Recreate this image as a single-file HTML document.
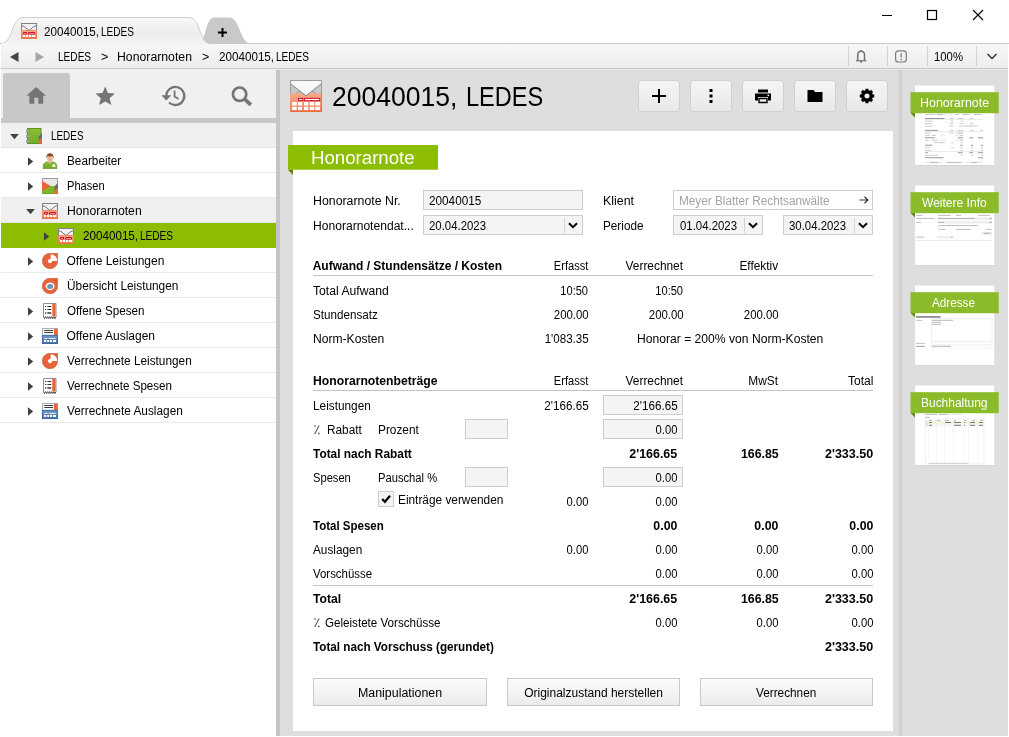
<!DOCTYPE html>
<html lang="de"><head><meta charset="utf-8"><title>20040015, LEDES</title>
<style>
*{box-sizing:border-box;margin:0;padding:0}
html,body{width:1009px;height:737px;overflow:hidden;background:#fff;font-family:"Liberation Sans",sans-serif;font-size:12px;color:#000}
#app{position:relative;width:1009px;height:737px;overflow:hidden;background:#fff}
.abs,.t,.b{position:absolute}
.t{height:16px;line-height:16px;white-space:nowrap;filter:grayscale(1)}
.bd{font-weight:bold}
#crumb{left:1px;top:44px;width:1007px;height:25px;background:linear-gradient(#f7f7f7,#ededed);border-bottom:1px solid #c9c9c9}
#hl69{left:276px;top:69px;width:732px;height:1px;background:#e9e9e9}
#side{left:1px;top:69px;width:275px;height:667px;background:#fff}
#sidetb{left:1px;top:69px;width:275px;height:50px;background:#f0f0f0}
#hometab{left:3px;top:73px;width:67px;height:46px;background:#c8c8c8;border-radius:3px 3px 0 0}
#sidebar-line{left:1px;top:118px;width:275px;height:5px;background:#c8c8c8}
.row{position:absolute;left:1px;width:275px;height:25px;border-bottom:1px solid #ebebeb}
.row.g{background:#f0f0f0;border-bottom-color:#e6e6e6}
.row.sel{background:#8cbd00;border-bottom-color:#8cbd00}
#split{left:276px;top:70px;width:4px;height:666px;background:#c5c5c5}
#main{left:280px;top:69px;width:621px;height:667px;background:#dedede}
#msh{left:897px;top:69px;width:5px;height:667px;background:linear-gradient(90deg,#dedede,#cacaca)}
#card{left:293px;top:131px;width:600px;height:600px;background:#fff}
#right{left:902px;top:69px;width:106px;height:667px;background:#dedede}
.btn{position:absolute;top:80px;width:42px;height:32px;border:1px solid #d0d0d0;border-radius:3px;background:linear-gradient(#f5f5f5,#e8e8e8)}
.btn svg{display:block}
.inp{position:absolute;height:19px;border:1px solid #cdcdcd;background:#f4f4f4}
.hl{position:absolute;height:1px;background:#c4c4c4}
.pbtn{position:absolute;top:678px;height:28px;border:1px solid #c8c8c8;background:linear-gradient(#fcfcfc,#ebebeb)}
.lab{position:absolute;background:#8cbd00;color:#fff}
#title{height:36px;line-height:36px;font-size:28px}
.ml{font-size:17.5px;height:24px;line-height:24px;color:#fff}
.rl{font-size:12.5px;color:#fff}
</style></head><body><div id="app">
<svg width="0" height="0" style="position:absolute">
 <defs>
  <symbol id="ic-env" viewBox="0 0 16 16">
    <linearGradient id="og" x1="0" y1="0" x2="0" y2="1"><stop offset="0" stop-color="#f7ad8c"/><stop offset="1" stop-color="#ee7a50"/></linearGradient>
    <rect x="0.500" y="0.500" width="15" height="7" fill="#f1f1f1" stroke="#808386"/>
    <path d="M1 2.800 L3.200 3.600 L8 7.500 L12.800 3.600 L15 2.800" fill="none" stroke="#74787b" stroke-width="1"/>
    <rect x="0" y="7" width="16" height="9" fill="url(#og)"/>
    <path d="M7.200 7 L8 7.700 L8.800 7z" fill="#74787b"/>
    <rect x="0.400" y="7.400" width="15.200" height="8.200" fill="none" stroke="#ec6f45" stroke-width="0.700" stroke-opacity="0.700"/>
    <path d="M2.500 11 V9.500 H5.500 V11z" fill="#fff" stroke="#c8142e" stroke-width="1"/>
    <path d="M7.500 11 V9.500 H13.500 V11z" fill="#fff" stroke="#c8142e" stroke-width="1"/>
    <path d="M2 11.900 h2.100 v2 h-2.100z M5 11.900 h2.100 v2 h-2.100z M8 11.900 h2.100 v2 h-2.100z M11 11.900 h3.200 v2 h-3.200z" fill="#fff"/>
  </symbol>
  <symbol id="ic-env32" viewBox="0 0 32 32">
    <linearGradient id="og2" x1="0" y1="0" x2="0" y2="1"><stop offset="0" stop-color="#f6ab8a"/><stop offset="1" stop-color="#ef7c52"/></linearGradient>
    <rect x="0.500" y="0.500" width="31" height="14" fill="#c6c8c9" stroke="#9a9c9e"/>
    <rect x="0" y="13.200" width="32" height="18.800" fill="url(#og2)"/>
    <path d="M31.500 13.200 V31.500 H0.500" fill="none" stroke="#ea6a3e" stroke-width="1" stroke-opacity="0.800"/>
    <path d="M6.500 13.200 L10.500 10.500 M25.500 13.200 L21.500 10.500" fill="none" stroke="#8d8f91" stroke-width="0.900"/>
    <path d="M1 1 H31 V4 L16 15.800 L1 4z" fill="#f8f8f8"/>
    <path d="M1 4 L16 15.800 L31 4" fill="none" stroke="#85888a" stroke-width="1"/>
    <rect x="8.500" y="18.400" width="4.200" height="2.200" fill="#fff" stroke="#cc2238" stroke-width="1.100"/>
    <rect x="14.500" y="18.400" width="15.200" height="2.200" fill="#fff" stroke="#cc2238" stroke-width="1.100"/>
    <path d="M2.100 22 h4.700 v3.600 h-4.700z M8 22 h4.300 v3.600 h-4.300z M14 22 h4.300 v3.600 h-4.300z M19.700 22 h4.500 v3.600 h-4.500z M25.200 22 h4.800 v3.600 h-4.800z M2.100 26.800 h4.700 v3.300 h-4.700z M8 26.800 h4.300 v3.300 h-4.300z M14 26.800 h4.300 v3.300 h-4.300z M19.700 26.800 h4.500 v3.300 h-4.500z M25.200 26.800 h4.800 v3.300 h-4.800z" fill="#fff"/>
  </symbol>
  <symbol id="ic-book" viewBox="0 0 16 16">
    <linearGradient id="gg2" x1="0" y1="0" x2="0" y2="1"><stop offset="0" stop-color="#8cbf30"/><stop offset="1" stop-color="#75ab27"/></linearGradient>
    <rect x="1.500" y="0.500" width="13.500" height="15" fill="url(#gg2)" stroke="#5e9420"/>
    <path d="M0.200 2.300 h2.600 a1 1 0 0 1 0 2 h-2.600z M0.200 7.300 h2.600 a1 1 0 0 1 0 2 h-2.600z M0.200 12.300 h2.600 a1 1 0 0 1 0 2 h-2.600z" fill="#bdbdbd" stroke="#777" stroke-width="0.600"/>
    <path d="M12.800 8.300 L15.400 5.400 L16 6 L16 10.600 L12.800 12.300z" fill="#6b6b6b"/>
    <path d="M12.800 12.300 L16 10.600 L16 16 L12.800 16z" fill="#ea633a"/>
  </symbol>
  <symbol id="ic-person" viewBox="0 0 16 16">
    <linearGradient id="gg1" x1="0" y1="0" x2="0" y2="1"><stop offset="0" stop-color="#8cc034"/><stop offset="1" stop-color="#6fa524"/></linearGradient>
    <path d="M1.200 15.700 v-3.400 c0 -1.800 2 -3 4.300 -3.600 l2.500 2.300 l2.500 -2.300 c2.300 0.600 4.300 1.800 4.300 3.600 v3.400z" fill="url(#gg1)" stroke="#5e9420" stroke-width="0.600"/>
    <path d="M6 8.300 L8 10.800 L10 8.300z" fill="#e9b79c"/>
    <ellipse cx="8" cy="5.600" rx="2.700" ry="3.300" fill="#e8b195"/>
    <path d="M4.600 5.800 c-0.800 -3.400 1 -5.500 3.400 -5.500 s4.200 2.100 3.400 5.500 c-0.300 -1.700 -0.900 -2.500 -1.500 -2.800 c-1.200 0.600 -2.600 0.600 -3.800 0 c-0.600 0.300 -1.200 1.100 -1.500 2.800z" fill="#8a4a26"/>
    <rect x="10.300" y="11.700" width="3" height="2.300" fill="#fff"/>
    <rect x="11.200" y="11.100" width="1.200" height="0.800" fill="#fff"/>
  </symbol>
  <symbol id="ic-phase" viewBox="0 0 16 16">
    <rect x="0.500" y="0.500" width="15" height="9" fill="#e8e8e8" stroke="#9d9d9d"/>
    <path d="M0 8 L13 8 L13 16 L0 16z" fill="#7eb52c"/>
    <path d="M0.300 15.700 h12.500" stroke="#5e9420" stroke-width="0.600"/>
    <path d="M0 2.800 L8.500 8 L0 13.200z" fill="#ea633a"/>
    <path d="M12.500 8.500 L15.300 5.500 L16 6.200 L16 10.800 L12.500 12.500z" fill="#6b6b6b"/>
    <path d="M12.500 12.500 L16 10.800 L16 16 L12.500 16z" fill="#ea633a"/>
  </symbol>
  <symbol id="ic-pie" viewBox="0 0 16 16">
    <path d="M8 0.300 H15.700 V8 A7.700 7.700 0 1 1 8 0.300z" fill="#e6643c" stroke="#cf5631" stroke-width="0.600"/>
    <path d="M8.700 8.100 V1.200 A6.800 6.800 0 0 1 15.300 8.100z" fill="#fff"/>
    <path d="M12.300 1.300 L15 4" stroke="#cf5631" stroke-width="0.700"/>
    <circle cx="8.100" cy="8.100" r="2.100" fill="#fff"/>
  </symbol>
  <symbol id="ic-over" viewBox="0 0 16 16">
    <path d="M8 0.300 H15.700 V8 A7.700 7.700 0 1 1 8 0.300z" fill="#e6643c" stroke="#cf5631" stroke-width="0.600"/>
    <ellipse cx="8.100" cy="8.300" rx="4.400" ry="3.900" fill="#fff"/>
    <ellipse cx="8.100" cy="8.400" rx="3" ry="2.500" fill="#6e94b8"/>
    <path d="M12.300 1.300 L15 4" stroke="#b9472a" stroke-width="0.800"/>
  </symbol>
  <symbol id="ic-rcpt" viewBox="0 0 16 16">
    <path d="M1.500 0.500 H14 V13.800 H1.500z" fill="#fff"/>
    <path d="M1.500 14 V0.500 H14 V14" fill="none" stroke="#8f8f8f" stroke-width="1"/>
    <path d="M1.500 13.600 l1.040 2 l1.040 -2 l1.040 2 l1.040 -2 l1.040 2 l1.040 -2 l1.040 2 l1.040 -2 l1.040 2 l1.040 -2 l1.040 2 l1.060 -2" fill="#fff" stroke="#4f4f4f" stroke-width="1"/>
    <rect x="10.300" y="1" width="3.200" height="12.200" fill="#ea633a"/>
    <path d="M3 3.500 h1.200 M5.300 3.500 h4 M3 6.500 h1.200 M5.300 6.500 h4" stroke="#333" stroke-width="1"/>
    <path d="M3 10 h1.200 M5.300 10 h4" stroke="#333" stroke-width="1.700"/>
  </symbol>
  <symbol id="ic-ausl" viewBox="0 0 16 16">
    <linearGradient id="bg1" x1="0" y1="0" x2="0" y2="1"><stop offset="0" stop-color="#6f97c4"/><stop offset="1" stop-color="#4472a6"/></linearGradient>
    <rect x="0.500" y="0.500" width="15" height="7" fill="#fff" stroke="#a3adb8"/>
    <rect x="12" y="1" width="3.500" height="6" fill="#ea633a"/>
    <path d="M2.200 2.500 h8.800 M2.200 4.500 h8.800" stroke="#3a3a3a" stroke-width="1"/>
    <rect x="0" y="6.900" width="16" height="9.100" fill="url(#bg1)"/>
    <rect x="0.400" y="7.300" width="15.200" height="8.300" fill="none" stroke="#3a679c" stroke-width="0.800"/>
    <path d="M2.500 10.400 h2.800 M7.400 10.400 h6" stroke="#fff" stroke-width="1"/>
    <path d="M2 9.600 v1.300 M5.800 9.600 v1.300 M6.900 9.600 v1.300 M13.900 9.600 v1.300" stroke="#dfe8f2" stroke-width="0.500"/>
    <path d="M2 12 h2.200 v1.900 h-2.200z M5.200 12 h1.900 v1.900 h-1.900z M8 12 h2 v1.900 h-2z M11 12 h3 v1.900 h-3z" fill="#fff"/>
  </symbol>
 </defs>
</svg>

<svg class="abs" style="left:0;top:0" width="1009" height="45" viewBox="0 0 1009 45">
  <defs><linearGradient id="tg" x1="0" y1="0" x2="0" y2="1"><stop offset="0" stop-color="#f8f8f8"/><stop offset="0.55" stop-color="#ececec"/><stop offset="1" stop-color="#f5f5f5"/></linearGradient></defs>
  <path d="M198 43.500 C206 43.500 205 17.500 214 17.500 L229 17.500 C240.500 17.500 239.500 43.500 251 43.500 Z" fill="#c9c9c9"/>
  <path d="M0 43.500 L1009 43.500" stroke="#c9c9c9" stroke-width="1"/>
  <path d="M1.500 45 L1.500 43.500 C12.500 43.500 11.500 17.500 23 17.500 L189 17.500 C200.500 17.500 199.500 43.500 209.500 43.500 L209.500 45 Z" fill="url(#tg)" stroke="#cdcdcd" stroke-width="1"/>
  <path d="M218 32.500 h9 M222.500 28 v9" stroke="#000" stroke-width="2"/>
  <path d="M882 15.500 h10" stroke="#000" stroke-width="1"/>
  <rect x="927.500" y="10.500" width="9" height="9" fill="none" stroke="#000" stroke-width="1.200"/>
  <path d="M973 10 l10 10 M983 10 l-10 10" stroke="#000" stroke-width="1.100"/>
</svg>
<div class="abs" id="crumb"></div>
<div class="abs" style="left:2px;top:43px;width:206px;height:2px;background:#f5f5f5"></div>
<svg class="abs" style="left:0;top:44px" width="1009" height="24" viewBox="0 0 1009 24">
  <path d="M10 13 l8.500 -5 v10 z" fill="#444"/>
  <path d="M44 13 l-8.500 -5 v10 z" fill="#a6a6a6"/>
  <path d="M848.500 2 v20 M887.500 2 v20 M927.500 2 v20 M976.500 2 v20" stroke="#d2d2d2" stroke-width="1"/>
  <path d="M857.700 16.500 V11.200 C857.700 8.600 859 7.300 861.100 7.300 C863.200 7.300 864.500 8.600 864.500 11.200 V16.500" fill="none" stroke="#707070" stroke-width="1.500"/>
  <path d="M856 16.700 H866.300" stroke="#7a7a7a" stroke-width="1.400"/>
  <circle cx="861.100" cy="6.800" r="0.900" fill="#7a7a7a"/>
  <rect x="860.300" y="17.300" width="1.700" height="1.600" fill="#7a7a7a"/>
  <rect x="895.600" y="6.900" width="10.700" height="11.100" rx="2.800" fill="none" stroke="#7a7a7a" stroke-width="1.200"/>
  <path d="M901.200 9.200 v4.300 M901.200 14.800 v1.400" stroke="#7a7a7a" stroke-width="1.300"/>
  <path d="M987.500 10 l4.500 4.500 l4.500 -4.500" fill="none" stroke="#333" stroke-width="1.400"/>
</svg>
<svg class="abs" style="left:21px;top:23px" width="16" height="16" viewBox="0 0 16 16"><use href="#ic-env"/></svg>
<div id="t0" class="t" style="top:24px;left:44.4px;transform:scaleX(0.9712);transform-origin:0 50%;">20040015,</div>
<div id="t1" class="t" style="top:24px;left:101.4px;transform:scaleX(0.8359);transform-origin:0 50%;">LEDES</div>
<div id="t2" class="t" style="top:49px;left:57.7px;transform:scaleX(0.8410);transform-origin:0 50%;">LEDES</div>
<div id="t3" class="t" style="top:49px;left:101px;transform:scaleX(1.0405);transform-origin:0 50%;">&gt;</div>
<div id="t4" class="t" style="top:49px;left:116.7px;transform:scaleX(1.0219);transform-origin:0 50%;">Honorarnoten</div>
<div id="t5" class="t" style="top:49px;left:202px;transform:scaleX(1.0405);transform-origin:0 50%;">&gt;</div>
<div id="t6" class="t" style="top:49px;left:218.5px;transform:scaleX(0.9712);transform-origin:0 50%;">20040015,</div>
<div id="t7" class="t" style="top:49px;left:275.5px;transform:scaleX(0.8359);transform-origin:0 50%;">LEDES</div>
<div id="t8" class="t" style="top:49px;left:933.8px;transform:scaleX(0.9445);transform-origin:0 50%;">100%</div>
<div class="abs" id="side"></div><div class="abs" id="sidetb"></div><div class="abs" id="hometab"></div><div class="abs" id="sidebar-line"></div>

<svg class="abs" style="left:0;top:69px" width="275" height="50" viewBox="0 69 275 50">
  <!-- home -->
  <path d="M36.200 87 L46 95.800 H43.200 V103.800 H38.300 V97.800 H34.300 V103.800 H29.300 V95.800 H26.400 Z" fill="#757575"/>
  <!-- star -->
  <path d="M105.200 86.500 L107.900 93 L115 93.600 L109.600 98.200 L111.300 105.100 L105.200 101.400 L99.100 105.100 L100.800 98.200 L95.400 93.600 L102.500 93 Z" fill="#757575"/>
  <!-- history -->
  <g fill="none" stroke="#757575">
    <path d="M166.300 96 A9 9 0 1 1 169.100 102.500" stroke-width="2.300"/>
    <path d="M174.600 90.500 V96.500 L178.600 99" stroke-width="1.800"/>
  </g>
  <path d="M161.300 95.300 H171.300 L166.300 100.500 Z" fill="#757575"/>
  <!-- search -->
  <circle cx="239.600" cy="94.200" r="6.700" fill="none" stroke="#757575" stroke-width="2.700"/>
  <path d="M244.600 99.200 L250.900 104.800" stroke="#757575" stroke-width="3.800"/>
</svg>

<div class="row g" style="top:123px"></div>
<svg class="abs" style="left:10px;top:134px" width="9" height="6" viewBox="0 0 9 6"><path d="M0.200 0 H8.800 L4.500 5.200z" fill="#404040"/></svg>
<svg class="abs" style="left:26px;top:128px" width="16" height="16" viewBox="0 0 16 16"><use href="#ic-book"/></svg>
<div id="t9" class="t" style="top:128px;left:50.5px;transform:scaleX(0.8257);transform-origin:0 50%;">LEDES</div>
<div class="row " style="top:148px"></div>
<svg class="abs" style="left:28px;top:157px" width="6" height="9" viewBox="0 0 6 9"><path d="M0 0.300 L5.200 4.500 L0 8.700z" fill="#404040"/></svg>
<svg class="abs" style="left:42px;top:153px" width="16" height="16" viewBox="0 0 16 16"><use href="#ic-person"/></svg>
<div id="t10" class="t" style="top:153px;left:66.5px;transform:scaleX(0.9806);transform-origin:0 50%;">Bearbeiter</div>
<div class="row " style="top:173px"></div>
<svg class="abs" style="left:28px;top:182px" width="6" height="9" viewBox="0 0 6 9"><path d="M0 0.300 L5.200 4.500 L0 8.700z" fill="#404040"/></svg>
<svg class="abs" style="left:42px;top:178px" width="16" height="16" viewBox="0 0 16 16"><use href="#ic-phase"/></svg>
<div id="t11" class="t" style="top:178px;left:66.5px;transform:scaleX(0.9262);transform-origin:0 50%;">Phasen</div>
<div class="row g" style="top:198px"></div>
<svg class="abs" style="left:26px;top:209px" width="9" height="6" viewBox="0 0 9 6"><path d="M0.200 0 H8.800 L4.500 5.200z" fill="#404040"/></svg>
<svg class="abs" style="left:42px;top:203px" width="16" height="16" viewBox="0 0 16 16"><use href="#ic-env"/></svg>
<div id="t12" class="t" style="top:203px;left:66.5px;transform:scaleX(1.0178);transform-origin:0 50%;">Honorarnoten</div>
<div class="row sel" style="top:223px"></div>
<svg class="abs" style="left:44px;top:232px" width="6" height="9" viewBox="0 0 6 9"><path d="M0 0.300 L5.200 4.500 L0 8.700z" fill="#404040"/></svg>
<svg class="abs" style="left:58px;top:228px" width="16" height="16" viewBox="0 0 16 16"><use href="#ic-env"/></svg>
<div id="t13" class="t" style="top:228px;left:83.4px;transform:scaleX(0.9712);transform-origin:0 50%;">20040015,</div>
<div id="t14" class="t" style="top:228px;left:140.4px;transform:scaleX(0.8359);transform-origin:0 50%;">LEDES</div>
<div class="row " style="top:248px"></div>
<svg class="abs" style="left:28px;top:257px" width="6" height="9" viewBox="0 0 6 9"><path d="M0 0.300 L5.200 4.500 L0 8.700z" fill="#404040"/></svg>
<svg class="abs" style="left:42px;top:253px" width="16" height="16" viewBox="0 0 16 16"><use href="#ic-pie"/></svg>
<div id="t15" class="t" style="top:253px;left:66.5px;">Offene Leistungen</div>
<div class="row " style="top:273px"></div>
<svg class="abs" style="left:42px;top:278px" width="16" height="16" viewBox="0 0 16 16"><use href="#ic-over"/></svg>
<div id="t16" class="t" style="top:278px;left:66.5px;transform:scaleX(0.9882);transform-origin:0 50%;">Übersicht Leistungen</div>
<div class="row " style="top:298px"></div>
<svg class="abs" style="left:28px;top:307px" width="6" height="9" viewBox="0 0 6 9"><path d="M0 0.300 L5.200 4.500 L0 8.700z" fill="#404040"/></svg>
<svg class="abs" style="left:42px;top:303px" width="16" height="16" viewBox="0 0 16 16"><use href="#ic-rcpt"/></svg>
<div id="t17" class="t" style="top:303px;left:66.5px;transform:scaleX(0.9706);transform-origin:0 50%;">Offene Spesen</div>
<div class="row " style="top:323px"></div>
<svg class="abs" style="left:28px;top:332px" width="6" height="9" viewBox="0 0 6 9"><path d="M0 0.300 L5.200 4.500 L0 8.700z" fill="#404040"/></svg>
<svg class="abs" style="left:42px;top:328px" width="16" height="16" viewBox="0 0 16 16"><use href="#ic-ausl"/></svg>
<div id="t18" class="t" style="top:328px;left:66.5px;">Offene Auslagen</div>
<div class="row " style="top:348px"></div>
<svg class="abs" style="left:28px;top:357px" width="6" height="9" viewBox="0 0 6 9"><path d="M0 0.300 L5.200 4.500 L0 8.700z" fill="#404040"/></svg>
<svg class="abs" style="left:42px;top:353px" width="16" height="16" viewBox="0 0 16 16"><use href="#ic-pie"/></svg>
<div id="t19" class="t" style="top:353px;left:66.5px;transform:scaleX(0.9837);transform-origin:0 50%;">Verrechnete Leistungen</div>
<div class="row " style="top:373px"></div>
<svg class="abs" style="left:28px;top:382px" width="6" height="9" viewBox="0 0 6 9"><path d="M0 0.300 L5.200 4.500 L0 8.700z" fill="#404040"/></svg>
<svg class="abs" style="left:42px;top:378px" width="16" height="16" viewBox="0 0 16 16"><use href="#ic-rcpt"/></svg>
<div id="t20" class="t" style="top:378px;left:66.5px;transform:scaleX(0.9655);transform-origin:0 50%;">Verrechnete Spesen</div>
<div class="row " style="top:398px"></div>
<svg class="abs" style="left:28px;top:407px" width="6" height="9" viewBox="0 0 6 9"><path d="M0 0.300 L5.200 4.500 L0 8.700z" fill="#404040"/></svg>
<svg class="abs" style="left:42px;top:403px" width="16" height="16" viewBox="0 0 16 16"><use href="#ic-ausl"/></svg>
<div id="t21" class="t" style="top:403px;left:66.5px;transform:scaleX(0.9862);transform-origin:0 50%;">Verrechnete Auslagen</div>
<div class="abs" id="split"></div>
<div class="abs" id="main"></div><div class="abs" id="msh"></div>
<svg class="abs" style="left:290px;top:80px" width="32" height="32" viewBox="0 0 32 32"><use href="#ic-env32"/></svg>
<div id="t22" class="t" style="top:79px;left:332.3px;transform:scaleX(0.9472);transform-origin:0 50%;font-size:28px;height:36px;line-height:36px;">20040015,</div>
<div id="t23" class="t" style="top:79px;left:465.63px;transform:scaleX(0.8422);transform-origin:0 50%;font-size:28px;height:36px;line-height:36px;">LEDES</div>
<div class="btn" style="left:638px"><svg width="40" height="30" viewBox="0 0 40 30"><path d="M13 15 h14 M20 8 v14" stroke="#000" stroke-width="2"/></svg></div>
<div class="btn" style="left:690px"><svg width="40" height="30" viewBox="0 0 40 30"><path d="M18.500 8 h3 v3 h-3z M18.500 13.500 h3 v3 h-3z M18.500 19 h3 v3 h-3z" fill="#000"/></svg></div>
<div class="btn" style="left:742px"><svg width="40" height="30" viewBox="0 0 40 30"><path d="M15 8.500 h10 v3 h-10z" fill="#000"/><path d="M12 12.500 h16 v7 h-3 v-3.500 h-10 v3.500 h-3z" fill="#000"/><path d="M16 17.500 h8 v4 h-8z" fill="none" stroke="#000" stroke-width="1.400"/><rect x="24.500" y="13.700" width="1.600" height="1.400" fill="#fff"/></svg></div>
<div class="btn" style="left:794px"><svg width="40" height="30" viewBox="0 0 40 30"><path d="M12.500 9 h6 l1.500 2 h7.500 v10 h-15z" fill="#000"/></svg></div>
<div class="btn" style="left:846px"><svg width="40" height="30" viewBox="0 0 40 30"><g transform="translate(20 15)"><circle r="4.300" fill="none" stroke="#000" stroke-width="3.400"/><g fill="#000"><rect x="-1.500" y="-7.200" width="3" height="3"/><rect x="-1.500" y="4.200" width="3" height="3"/><rect x="-7.200" y="-1.500" width="3" height="3"/><rect x="4.200" y="-1.500" width="3" height="3"/><g transform="rotate(45)"><rect x="-1.500" y="-7.200" width="3" height="3"/><rect x="-1.500" y="4.200" width="3" height="3"/><rect x="-7.200" y="-1.500" width="3" height="3"/><rect x="4.200" y="-1.500" width="3" height="3"/></g></g></g></svg></div>
<div class="abs" id="card"></div>
<svg class="abs" style="left:288px;top:169px" width="5" height="7" viewBox="0 0 5 7"><path d="M0 0.700 H5 V6z" fill="#5b7d00"/></svg>
<svg class="abs" style="left:288px;top:145px" width="150" height="25" viewBox="0 0 150 25"><rect x="0" y="0" width="150" height="24.700" fill="#8cbd00"/></svg>
<div id="t24" class="t ml" style="top:146px;left:311.3px;transform:scaleX(1.0653);transform-origin:0 50%;">Honorarnote</div>
<div id="t25" class="t" style="top:193px;left:312.7px;transform:scaleX(1.0282);transform-origin:0 50%;">Honorarnote Nr.</div>
<div class="inp" style="left:423px;top:190px;width:160px;height:20px"></div>
<div id="t26" class="t" style="top:193px;left:429.3px;transform:scaleX(0.9796);transform-origin:0 50%;">20040015</div>
<div id="t27" class="t" style="top:193px;left:602.5px;transform:scaleX(1.0323);transform-origin:0 50%;">Klient</div>
<div class="inp" style="left:673px;top:190px;width:200px;height:20px;background:#fff"></div>
<div id="t28" class="t" style="top:193px;left:678.7px;transform:scaleX(0.9811);transform-origin:0 50%;color:#a3a3a3;">Meyer Blatter Rechtsanwälte</div>
<svg class="abs" style="left:859px;top:195px" width="10" height="10" viewBox="0 0 10 10"><path d="M0.500 5 H8.500 M5.500 1.800 L8.800 5 L5.500 8.200" fill="none" stroke="#333" stroke-width="1.200"/></svg>
<div id="t29" class="t" style="top:218px;left:312.7px;transform:scaleX(1.0072);transform-origin:0 50%;">Honorarnotendat...</div>
<div class="inp" style="left:423px;top:215px;width:160px;height:20px"></div>
<div id="t30" class="t" style="top:218px;left:429.3px;transform:scaleX(0.9490);transform-origin:0 50%;">20.04.2023</div>
<div class="hl" style="left:564px;top:218px;width:1px;height:15px;background:#d4d4d4"></div>
<svg class="abs" style="left:568px;top:222px" width="10" height="7" viewBox="0 0 10 7"><path d="M1 1.200 L5 5.200 L9 1.200" fill="none" stroke="#000" stroke-width="2"/></svg>
<div id="t31" class="t" style="top:218px;left:602.5px;transform:scaleX(0.9789);transform-origin:0 50%;">Periode</div>
<div class="inp" style="left:673px;top:215px;width:90px;height:20px"></div>
<div id="t32" class="t" style="top:218px;left:679.5px;transform:scaleX(0.9490);transform-origin:0 50%;">01.04.2023</div>
<div class="hl" style="left:744px;top:218px;width:1px;height:15px;background:#d4d4d4"></div>
<svg class="abs" style="left:748px;top:222px" width="10" height="7" viewBox="0 0 10 7"><path d="M1 1.200 L5 5.200 L9 1.200" fill="none" stroke="#000" stroke-width="2"/></svg>
<div class="inp" style="left:783px;top:215px;width:90px;height:20px"></div>
<div id="t33" class="t" style="top:218px;left:789.2px;transform:scaleX(0.9490);transform-origin:0 50%;">30.04.2023</div>
<div class="hl" style="left:854px;top:218px;width:1px;height:15px;background:#d4d4d4"></div>
<svg class="abs" style="left:858px;top:222px" width="10" height="7" viewBox="0 0 10 7"><path d="M1 1.200 L5 5.200 L9 1.200" fill="none" stroke="#000" stroke-width="2"/></svg>
<div id="t34" class="t bd" style="top:258px;left:312.7px;">Aufwand / Stundensätze / Kosten</div>
<div id="t35" class="t" style="top:258px;right:420.7px;transform:scaleX(0.9238);transform-origin:100% 50%;">Erfasst</div>
<div id="t36" class="t" style="top:258px;right:325.7px;transform:scaleX(0.9906);transform-origin:100% 50%;">Verrechnet</div>
<div id="t37" class="t" style="top:258px;right:230.7px;transform:scaleX(0.9887);transform-origin:100% 50%;">Effektiv</div>
<div class="hl" style="left:313px;top:275px;width:560px"></div>
<div id="t38" class="t" style="top:283px;left:312.7px;transform:scaleX(1.0145);transform-origin:0 50%;">Total Aufwand</div>
<div id="t39" class="t" style="top:283px;right:420.7px;transform:scaleX(0.9224);transform-origin:100% 50%;">10:50</div>
<div id="t40" class="t" style="top:283px;right:325.7px;transform:scaleX(0.9224);transform-origin:100% 50%;">10:50</div>
<div id="t41" class="t" style="top:307px;left:312.7px;transform:scaleX(0.9712);transform-origin:0 50%;">Stundensatz</div>
<div id="t42" class="t" style="top:307px;right:420.7px;transform:scaleX(0.9509);transform-origin:100% 50%;">200.00</div>
<div id="t43" class="t" style="top:307px;right:325.7px;transform:scaleX(0.9509);transform-origin:100% 50%;">200.00</div>
<div id="t44" class="t" style="top:307px;right:230.7px;transform:scaleX(0.9509);transform-origin:100% 50%;">200.00</div>
<div id="t45" class="t" style="top:331px;left:312.7px;transform:scaleX(1.0087);transform-origin:0 50%;">Norm-Kosten</div>
<div id="t46" class="t" style="top:331px;right:420.7px;transform:scaleX(0.9634);transform-origin:100% 50%;">1'083.35</div>
<div id="t47" class="t" style="top:331px;left:637.4px;transform:scaleX(1.0101);transform-origin:0 50%;">Honorar = 200% von Norm-Kosten</div>
<div id="t48" class="t bd" style="top:373px;left:312.7px;transform:scaleX(1.0156);transform-origin:0 50%;">Honorarnotenbeträge</div>
<div id="t49" class="t" style="top:373px;right:420.7px;transform:scaleX(0.9238);transform-origin:100% 50%;">Erfasst</div>
<div id="t50" class="t" style="top:373px;right:325.7px;transform:scaleX(0.9906);transform-origin:100% 50%;">Verrechnet</div>
<div id="t51" class="t" style="top:373px;right:230.7px;transform:scaleX(0.9900);transform-origin:100% 50%;">MwSt</div>
<div id="t52" class="t" style="top:373px;right:135.7px;">Total</div>
<div class="hl" style="left:313px;top:390px;width:560px"></div>
<div id="t53" class="t" style="top:398px;left:312.7px;transform:scaleX(0.9844);transform-origin:0 50%;">Leistungen</div>
<div id="t54" class="t" style="top:398px;right:420.7px;transform:scaleX(0.9700);transform-origin:100% 50%;">2'166.65</div>
<div class="inp" style="left:603px;top:395px;width:80px;height:20px"></div>
<div id="t55" class="t" style="top:398px;right:331.7px;transform:scaleX(0.9700);transform-origin:100% 50%;">2'166.65</div>
<div id="t56" class="t" style="top:422px;left:313.7px;transform:scaleX(1.3000);transform-origin:0 50%;color:#555;">⁒</div>
<div id="t57" class="t" style="top:422px;left:326.7px;transform:scaleX(0.9842);transform-origin:0 50%;">Rabatt</div>
<div id="t58" class="t" style="top:422px;left:377.7px;transform:scaleX(0.9865);transform-origin:0 50%;">Prozent</div>
<div class="inp" style="left:465px;top:419px;width:43px;height:20px"></div>
<div class="inp" style="left:603px;top:419px;width:80px;height:20px"></div>
<div id="t59" class="t" style="top:422px;right:331.7px;transform:scaleX(0.9332);transform-origin:100% 50%;">0.00</div>
<div id="t60" class="t bd" style="top:446px;left:312.7px;transform:scaleX(0.9900);transform-origin:0 50%;">Total nach Rabatt</div>
<div id="t61" class="t bd" style="top:446px;right:331.7px;transform:scaleX(1.0382);transform-origin:100% 50%;">2'166.65</div>
<div id="t62" class="t bd" style="top:446px;right:230.7px;transform:scaleX(1.0272);transform-origin:100% 50%;">166.85</div>
<div id="t63" class="t bd" style="top:446px;right:135.7px;transform:scaleX(1.0447);transform-origin:100% 50%;">2'333.50</div>
<div id="t64" class="t" style="top:470px;left:312.7px;transform:scaleX(0.9287);transform-origin:0 50%;">Spesen</div>
<div id="t65" class="t" style="top:470px;left:377.7px;transform:scaleX(0.9325);transform-origin:0 50%;">Pauschal %</div>
<div class="inp" style="left:465px;top:467px;width:43px;height:20px"></div>
<div class="inp" style="left:603px;top:467px;width:80px;height:20px"></div>
<div id="t66" class="t" style="top:470px;right:331.7px;transform:scaleX(0.9332);transform-origin:100% 50%;">0.00</div>
<div class="inp" style="left:378px;top:491px;width:16px;height:16px"><svg class="abs" style="left:0;top:0" width="14" height="14" viewBox="0 0 14 14"><path d="M3.200 7 L5.900 9.800 L11 3.800" fill="none" stroke="#000" stroke-width="2.200"/></svg></div>
<div id="t67" class="t" style="top:492px;left:397.7px;transform:scaleX(0.9866);transform-origin:0 50%;">Einträge verwenden</div>
<div id="t68" class="t" style="top:494px;right:420.7px;transform:scaleX(0.9332);transform-origin:100% 50%;">0.00</div>
<div id="t69" class="t" style="top:494px;right:331.7px;transform:scaleX(0.9332);transform-origin:100% 50%;">0.00</div>
<div id="t70" class="t bd" style="top:518px;left:312.7px;transform:scaleX(0.9594);transform-origin:0 50%;">Total Spesen</div>
<div id="t71" class="t bd" style="top:518px;right:331.7px;transform:scaleX(1.0274);transform-origin:100% 50%;">0.00</div>
<div id="t72" class="t bd" style="top:518px;right:230.7px;transform:scaleX(1.0274);transform-origin:100% 50%;">0.00</div>
<div id="t73" class="t bd" style="top:518px;right:135.7px;transform:scaleX(1.0274);transform-origin:100% 50%;">0.00</div>
<div id="t74" class="t" style="top:542px;left:312.7px;transform:scaleX(0.9831);transform-origin:0 50%;">Auslagen</div>
<div id="t75" class="t" style="top:542px;right:420.7px;transform:scaleX(0.9332);transform-origin:100% 50%;">0.00</div>
<div id="t76" class="t" style="top:542px;right:331.7px;transform:scaleX(0.9332);transform-origin:100% 50%;">0.00</div>
<div id="t77" class="t" style="top:542px;right:230.7px;transform:scaleX(0.9332);transform-origin:100% 50%;">0.00</div>
<div id="t78" class="t" style="top:542px;right:135.7px;transform:scaleX(0.9332);transform-origin:100% 50%;">0.00</div>
<div id="t79" class="t" style="top:566px;left:312.7px;transform:scaleX(0.9509);transform-origin:0 50%;">Vorschüsse</div>
<div id="t80" class="t" style="top:566px;right:331.7px;transform:scaleX(0.9332);transform-origin:100% 50%;">0.00</div>
<div id="t81" class="t" style="top:566px;right:230.7px;transform:scaleX(0.9332);transform-origin:100% 50%;">0.00</div>
<div id="t82" class="t" style="top:566px;right:135.7px;transform:scaleX(0.9332);transform-origin:100% 50%;">0.00</div>
<div class="hl" style="left:313px;top:585px;width:560px"></div>
<div id="t83" class="t bd" style="top:591px;left:312.7px;transform:scaleX(1.0115);transform-origin:0 50%;">Total</div>
<div id="t84" class="t bd" style="top:591px;right:331.7px;transform:scaleX(1.0382);transform-origin:100% 50%;">2'166.65</div>
<div id="t85" class="t bd" style="top:591px;right:230.7px;transform:scaleX(1.0272);transform-origin:100% 50%;">166.85</div>
<div id="t86" class="t bd" style="top:591px;right:135.7px;transform:scaleX(1.0447);transform-origin:100% 50%;">2'333.50</div>
<div id="t87" class="t" style="top:615px;left:313.7px;transform:scaleX(1.3000);transform-origin:0 50%;color:#555;">⁒</div>
<div id="t88" class="t" style="top:615px;left:325.2px;transform:scaleX(0.9673);transform-origin:0 50%;">Geleistete Vorschüsse</div>
<div id="t89" class="t" style="top:615px;right:331.7px;transform:scaleX(0.9332);transform-origin:100% 50%;">0.00</div>
<div id="t90" class="t" style="top:615px;right:230.7px;transform:scaleX(0.9332);transform-origin:100% 50%;">0.00</div>
<div id="t91" class="t" style="top:615px;right:135.7px;transform:scaleX(0.9332);transform-origin:100% 50%;">0.00</div>
<div id="t92" class="t bd" style="top:639px;left:312.7px;transform:scaleX(0.9743);transform-origin:0 50%;">Total nach Vorschuss (gerundet)</div>
<div id="t93" class="t bd" style="top:639px;right:135.7px;transform:scaleX(1.0447);transform-origin:100% 50%;">2'333.50</div>
<div class="pbtn" style="left:313px;width:174px"></div>
<div class="pbtn" style="left:507px;width:173px"></div>
<div class="pbtn" style="left:700px;width:173px"></div>
<div id="t94" class="t" style="top:685px;left:357.7px;transform:scaleX(1.0331);transform-origin:0 50%;">Manipulationen</div>
<div id="t95" class="t" style="top:685px;left:524.2px;">Originalzustand herstellen</div>
<div id="t96" class="t" style="top:685px;left:756.2px;transform:scaleX(0.9822);transform-origin:0 50%;">Verrechnen</div>
<div class="abs" id="right"></div>
<svg class="abs" style="left:915px;top:85px" width="80" height="81" viewBox="0 0 80 81"><rect x="0" y="0.5" width="79.2" height="79.5" fill="#fff"/><rect x="0" y="80" width="79.200" height="0.700" fill="#d2d2d2"/><rect x="10.0" y="66.1" width="58.0" height="0.6" fill="#dddddd"/><rect x="10.0" y="46.1" width="58.0" height="0.6" fill="#dddddd"/><rect x="10.0" y="34.2" width="58.0" height="0.6" fill="#dddddd"/><rect x="50.1" y="76.4" width="17.9" height="2" fill="#eeeeee"/><rect x="30.1" y="76.4" width="17.9" height="2" fill="#eeeeee"/><rect x="10.0" y="76.4" width="18.0" height="2" fill="#eeeeee"/><rect x="25.7" y="54.3" width="4.5" height="2" fill="#eeeeee"/><rect x="25.7" y="49.4" width="4.5" height="2" fill="#eeeeee"/><rect x="40.0" y="54.3" width="8.3" height="2" fill="#eeeeee"/><rect x="40.0" y="49.4" width="8.3" height="2" fill="#eeeeee"/><rect x="40.0" y="46.9" width="8.3" height="2" fill="#eeeeee"/><rect x="58.7" y="28.4" width="9.3" height="2" fill="#eeeeee"/><rect x="47.3" y="28.4" width="9.3" height="2" fill="#eeeeee"/><rect x="21.4" y="28.4" width="16.6" height="2" fill="#eeeeee"/><rect x="47.3" y="25.8" width="20.7" height="2" fill="#eeeeee"/><rect x="21.4" y="25.8" width="16.6" height="2" fill="#eeeeee"/><rect x="10.0" y="26.4" width="9.0" height="0.9" fill="#999" fill-opacity="0.55"/><rect x="22.0" y="26.4" width="5.3" height="0.9" fill="#999" fill-opacity="0.55"/><rect x="40.0" y="26.4" width="3.1" height="0.9" fill="#999" fill-opacity="0.55"/><rect x="47.9" y="26.4" width="15.5" height="0.9" fill="#999" fill-opacity="0.55"/><rect x="10.0" y="29.0" width="10.3" height="0.9" fill="#999" fill-opacity="0.55"/><rect x="22.0" y="29.0" width="5.8" height="0.9" fill="#999" fill-opacity="0.55"/><rect x="40.0" y="29.0" width="4.1" height="0.9" fill="#999" fill-opacity="0.55"/><rect x="47.9" y="29.0" width="5.8" height="0.9" fill="#999" fill-opacity="0.55"/><rect x="59.3" y="29.0" width="5.8" height="0.9" fill="#999" fill-opacity="0.55"/><rect x="10.0" y="33.1" width="19.5" height="0.9" fill="#666" fill-opacity="0.75"/><rect x="35.0" y="33.1" width="3.5" height="0.9" fill="#999" fill-opacity="0.55"/><rect x="42.4" y="33.1" width="5.9" height="0.9" fill="#999" fill-opacity="0.55"/><rect x="54.2" y="33.1" width="3.9" height="0.9" fill="#999" fill-opacity="0.55"/><rect x="10.0" y="35.7" width="7.7" height="0.9" fill="#999" fill-opacity="0.55"/><rect x="35.6" y="35.7" width="2.8" height="0.9" fill="#999" fill-opacity="0.55"/><rect x="45.5" y="35.7" width="2.8" height="0.9" fill="#999" fill-opacity="0.55"/><rect x="10.0" y="38.2" width="6.6" height="0.9" fill="#999" fill-opacity="0.55"/><rect x="34.9" y="38.2" width="3.6" height="0.9" fill="#999" fill-opacity="0.55"/><rect x="44.7" y="38.2" width="3.6" height="0.9" fill="#999" fill-opacity="0.55"/><rect x="54.6" y="38.2" width="3.6" height="0.9" fill="#999" fill-opacity="0.55"/><rect x="10.0" y="40.6" width="7.3" height="0.9" fill="#999" fill-opacity="0.55"/><rect x="34.0" y="40.6" width="4.5" height="0.9" fill="#999" fill-opacity="0.55"/><rect x="43.7" y="40.6" width="19.2" height="0.9" fill="#999" fill-opacity="0.55"/><rect x="10.0" y="44.9" width="12.8" height="0.9" fill="#666" fill-opacity="0.75"/><rect x="35.0" y="44.9" width="3.5" height="0.9" fill="#999" fill-opacity="0.55"/><rect x="42.4" y="44.9" width="5.9" height="0.9" fill="#999" fill-opacity="0.55"/><rect x="55.1" y="44.9" width="3.0" height="0.9" fill="#999" fill-opacity="0.55"/><rect x="65.4" y="44.9" width="2.6" height="0.9" fill="#999" fill-opacity="0.55"/><rect x="10.0" y="47.5" width="5.9" height="0.9" fill="#999" fill-opacity="0.55"/><rect x="33.9" y="47.5" width="4.5" height="0.9" fill="#999" fill-opacity="0.55"/><rect x="43.1" y="47.5" width="4.5" height="0.9" fill="#999" fill-opacity="0.55"/><rect x="10.0" y="50.0" width="1.2" height="0.9" fill="#999" fill-opacity="0.55"/><rect x="11.5" y="50.0" width="3.5" height="0.9" fill="#999" fill-opacity="0.55"/><rect x="16.8" y="50.0" width="4.1" height="0.9" fill="#999" fill-opacity="0.55"/><rect x="45.5" y="50.0" width="2.2" height="0.9" fill="#999" fill-opacity="0.55"/><rect x="10.0" y="52.4" width="10.1" height="0.9" fill="#666" fill-opacity="0.75"/><rect x="42.8" y="52.4" width="4.9" height="0.9" fill="#666" fill-opacity="0.75"/><rect x="54.3" y="52.4" width="3.9" height="0.9" fill="#666" fill-opacity="0.75"/><rect x="63.0" y="52.4" width="5.0" height="0.9" fill="#666" fill-opacity="0.75"/><rect x="10.0" y="54.9" width="3.8" height="0.9" fill="#999" fill-opacity="0.55"/><rect x="16.8" y="54.9" width="6.0" height="0.9" fill="#999" fill-opacity="0.55"/><rect x="45.5" y="54.9" width="2.2" height="0.9" fill="#999" fill-opacity="0.55"/><rect x="18.8" y="57.2" width="10.8" height="0.9" fill="#999" fill-opacity="0.55"/><rect x="36.3" y="57.4" width="2.2" height="0.9" fill="#999" fill-opacity="0.55"/><rect x="45.5" y="57.4" width="2.2" height="0.9" fill="#999" fill-opacity="0.55"/><rect x="10.0" y="59.8" width="7.2" height="0.9" fill="#666" fill-opacity="0.75"/><rect x="45.2" y="59.8" width="2.4" height="0.9" fill="#666" fill-opacity="0.75"/><rect x="55.7" y="59.8" width="2.4" height="0.9" fill="#666" fill-opacity="0.75"/><rect x="65.6" y="59.8" width="2.4" height="0.9" fill="#666" fill-opacity="0.75"/><rect x="10.0" y="62.3" width="5.0" height="0.9" fill="#999" fill-opacity="0.55"/><rect x="36.3" y="62.3" width="2.2" height="0.9" fill="#999" fill-opacity="0.55"/><rect x="45.5" y="62.3" width="2.2" height="0.9" fill="#999" fill-opacity="0.55"/><rect x="55.9" y="62.3" width="2.2" height="0.9" fill="#999" fill-opacity="0.55"/><rect x="65.8" y="62.3" width="2.2" height="0.9" fill="#999" fill-opacity="0.55"/><rect x="10.0" y="64.8" width="6.0" height="0.9" fill="#999" fill-opacity="0.55"/><rect x="45.5" y="64.8" width="2.2" height="0.9" fill="#999" fill-opacity="0.55"/><rect x="55.9" y="64.8" width="2.2" height="0.9" fill="#999" fill-opacity="0.55"/><rect x="65.8" y="64.8" width="2.2" height="0.9" fill="#999" fill-opacity="0.55"/><rect x="10.0" y="67.3" width="2.8" height="0.9" fill="#666" fill-opacity="0.75"/><rect x="42.8" y="67.3" width="4.9" height="0.9" fill="#666" fill-opacity="0.75"/><rect x="54.3" y="67.3" width="3.9" height="0.9" fill="#666" fill-opacity="0.75"/><rect x="63.0" y="67.3" width="5.0" height="0.9" fill="#666" fill-opacity="0.75"/><rect x="10.0" y="69.8" width="1.2" height="0.9" fill="#999" fill-opacity="0.55"/><rect x="11.3" y="69.8" width="11.8" height="0.9" fill="#999" fill-opacity="0.55"/><rect x="45.5" y="69.8" width="2.2" height="0.9" fill="#999" fill-opacity="0.55"/><rect x="55.9" y="69.8" width="2.2" height="0.9" fill="#999" fill-opacity="0.55"/><rect x="65.8" y="69.8" width="2.2" height="0.9" fill="#999" fill-opacity="0.55"/><rect x="10.0" y="72.3" width="18.6" height="0.9" fill="#666" fill-opacity="0.75"/><rect x="63.0" y="72.3" width="5.0" height="0.9" fill="#666" fill-opacity="0.75"/><rect x="14.7" y="77.0" width="8.6" height="0.9" fill="#999" fill-opacity="0.55"/><rect x="31.9" y="77.0" width="14.2" height="0.9" fill="#999" fill-opacity="0.55"/><rect x="56.0" y="77.0" width="6.1" height="0.9" fill="#999" fill-opacity="0.55"/></svg>
<svg class="abs" style="left:910px;top:113px" width="5" height="5" viewBox="0 0 5 5"><path d="M0.500 0 H5 V4.500z" fill="#5d8a12"/></svg>
<svg class="abs" style="left:910px;top:92px" width="90" height="22" viewBox="0 0 90 22"><rect x="0.500" y="0.200" width="88.200" height="21" fill="#8bbb2b"/></svg>
<div id="t97" class="t rl" style="top:94.6px;left:919.8px;transform:scaleX(0.9942);transform-origin:0 50%;">Honorarnote</div>
<svg class="abs" style="left:915px;top:185px" width="80" height="81" viewBox="0 0 80 81"><rect x="0" y="0.5" width="79.2" height="79.5" fill="#fff"/><rect x="0" y="80" width="79.200" height="0.700" fill="#d2d2d2"/><rect x="22.0" y="32.3" width="55.0" height="2.4" fill="#eeeeee"/><rect x="22.0" y="36.1" width="55.0" height="2.4" fill="#eeeeee"/><rect x="22.0" y="51.0" width="16.5" height="2.4" fill="#eeeeee"/><rect x="67.0" y="47.1" width="10.0" height="2.4" fill="#e6e6e6"/><rect x="1.2" y="29.9" width="6.3" height="0.9" fill="#8a8a8a" fill-opacity="0.6"/><rect x="23.0" y="29.9" width="12.5" height="0.9" fill="#8a8a8a" fill-opacity="0.6"/><rect x="41.0" y="29.9" width="5.0" height="0.9" fill="#8a8a8a" fill-opacity="0.6"/><rect x="63.0" y="29.9" width="12.0" height="0.9" fill="#8a8a8a" fill-opacity="0.6"/><rect x="1.2" y="33.0" width="18.8" height="0.9" fill="#8a8a8a" fill-opacity="0.6"/><rect x="23.0" y="33.0" width="37.0" height="0.9" fill="#8a8a8a" fill-opacity="0.6"/><rect x="74.0" y="33.0" width="3.0" height="0.9" fill="#8a8a8a" fill-opacity="0.6"/><rect x="1.2" y="36.9" width="4.8" height="0.9" fill="#8a8a8a" fill-opacity="0.6"/><rect x="23.0" y="36.9" width="6.0" height="0.9" fill="#8a8a8a" fill-opacity="0.6"/><rect x="74.0" y="36.9" width="3.0" height="0.9" fill="#8a8a8a" fill-opacity="0.6"/><rect x="25.0" y="40.0" width="38.0" height="0.9" fill="#8a8a8a" fill-opacity="0.6"/><rect x="23.0" y="40.2" width="1.5" height="1.5" fill="#cccccc"/><rect x="25.0" y="43.9" width="5.5" height="0.9" fill="#8a8a8a" fill-opacity="0.6"/><rect x="41.0" y="43.9" width="15.0" height="0.9" fill="#8a8a8a" fill-opacity="0.6"/><rect x="71.0" y="43.9" width="6.0" height="0.9" fill="#8a8a8a" fill-opacity="0.6"/><rect x="23.0" y="43.6" width="1.5" height="1.5" fill="#cccccc"/><rect x="69.0" y="47.9" width="6.0" height="0.9" fill="#8a8a8a" fill-opacity="0.6"/><rect x="1.2" y="51.7" width="7.8" height="0.9" fill="#8a8a8a" fill-opacity="0.6"/><rect x="36.0" y="51.7" width="1.5" height="0.9" fill="#8a8a8a" fill-opacity="0.6"/><rect x="1.0" y="55.1" width="76.0" height="0.7" fill="#e4e4e4"/></svg>
<svg class="abs" style="left:910px;top:213px" width="5" height="5" viewBox="0 0 5 5"><path d="M0.500 0 H5 V4.500z" fill="#5d8a12"/></svg>
<svg class="abs" style="left:910px;top:192px" width="90" height="22" viewBox="0 0 90 22"><rect x="0.500" y="0.200" width="88.200" height="21" fill="#8bbb2b"/></svg>
<div id="t98" class="t rl" style="top:194.6px;left:922.4px;transform:scaleX(0.9632);transform-origin:0 50%;">Weitere Info</div>
<svg class="abs" style="left:915px;top:285px" width="80" height="81" viewBox="0 0 80 81"><rect x="0" y="0.5" width="79.2" height="79.5" fill="#fff"/><rect x="0" y="80" width="79.200" height="0.700" fill="#d2d2d2"/><rect x="16.5" y="33.5" width="60.5" height="22.5" fill="none" stroke="#e6e6e6" stroke-width="0.6"/><rect x="16.5" y="57" width="60.5" height="3" fill="none" stroke="#ececec" stroke-width="0.6"/><rect x="16.5" y="60" width="60.5" height="3" fill="none" stroke="#ececec" stroke-width="0.6"/><rect x="1.2" y="31.4" width="24.3" height="1.1" fill="#333333" fill-opacity="0.9"/><rect x="1.2" y="34.9" width="5.8" height="0.9" fill="#8a8a8a" fill-opacity="0.6"/><rect x="17.0" y="34.8" width="21.0" height="1" fill="#999999" fill-opacity="0.7"/><rect x="17.0" y="36.8" width="9.0" height="1" fill="#999999" fill-opacity="0.7"/><rect x="17.0" y="38.8" width="9.0" height="1" fill="#999999" fill-opacity="0.7"/><rect x="1.2" y="57.9" width="8.6" height="0.9" fill="#8a8a8a" fill-opacity="0.6"/><rect x="1.2" y="60.9" width="8.6" height="0.9" fill="#555555" fill-opacity="0.6"/><rect x="17.0" y="60.8" width="19.0" height="1" fill="#999999" fill-opacity="0.7"/></svg>
<svg class="abs" style="left:910px;top:313px" width="5" height="5" viewBox="0 0 5 5"><path d="M0.500 0 H5 V4.500z" fill="#5d8a12"/></svg>
<svg class="abs" style="left:910px;top:292px" width="90" height="22" viewBox="0 0 90 22"><rect x="0.500" y="0.200" width="88.200" height="21" fill="#8bbb2b"/></svg>
<div id="t99" class="t rl" style="top:294.6px;left:932.4px;transform:scaleX(0.9376);transform-origin:0 50%;">Adresse</div>
<svg class="abs" style="left:915px;top:385px" width="80" height="81" viewBox="0 0 80 81"><rect x="0" y="0.5" width="79.2" height="79.5" fill="#fff"/><rect x="0" y="80" width="79.200" height="0.700" fill="#d2d2d2"/><rect x="10.5" y="34" width="58.5" height="45" fill="none" stroke="#ececec" stroke-width="0.6"/><rect x="10.5" y="36.3" width="58.5" height="2.4" fill="#eef3d8"/><rect x="10.5" y="39.2" width="58.5" height="2.2" fill="#f3f3f3"/><rect x="10.5" y="36.3" width="2.5" height="5" fill="#e2e2e2"/><rect x="13.0" y="34" width="0.5" height="45" fill="#efefef"/><rect x="21.0" y="34" width="0.5" height="45" fill="#efefef"/><rect x="29.5" y="34" width="0.5" height="45" fill="#efefef"/><rect x="38.0" y="34" width="0.5" height="45" fill="#efefef"/><rect x="48.0" y="34" width="0.5" height="45" fill="#efefef"/><rect x="53.0" y="34" width="0.5" height="45" fill="#efefef"/><rect x="62.0" y="34" width="0.5" height="45" fill="#efefef"/><rect x="10.0" y="28.9" width="12.0" height="0.9" fill="#8a8a8a" fill-opacity="0.6"/><rect x="24.0" y="28.9" width="8.0" height="0.9" fill="#8a8a8a" fill-opacity="0.6"/><rect x="32.0" y="29.3" width="15.0" height="0.6" fill="#dddddd"/><rect x="10.0" y="31.9" width="5.0" height="0.9" fill="#8a8a8a" fill-opacity="0.6"/><rect x="14.0" y="34.9" width="3.0" height="1" fill="#9a9a9a" fill-opacity="0.7"/><rect x="22.0" y="34.9" width="3.5" height="1" fill="#9a9a9a" fill-opacity="0.7"/><rect x="30.0" y="34.9" width="4.0" height="1" fill="#9a9a9a" fill-opacity="0.7"/><rect x="39.0" y="34.9" width="2.0" height="1" fill="#9a9a9a" fill-opacity="0.7"/><rect x="49.0" y="34.9" width="2.0" height="1" fill="#9a9a9a" fill-opacity="0.7"/><rect x="57.0" y="34.9" width="3.0" height="1" fill="#9a9a9a" fill-opacity="0.7"/><rect x="65.0" y="34.9" width="3.0" height="1" fill="#9a9a9a" fill-opacity="0.7"/><rect x="14.0" y="37.0" width="3.0" height="1" fill="#666666" fill-opacity="0.85"/><rect x="30.0" y="37.0" width="6.0" height="1" fill="#666666" fill-opacity="0.85"/><rect x="39.0" y="37.0" width="7.0" height="1" fill="#666666" fill-opacity="0.85"/><rect x="49.0" y="37.0" width="1.0" height="1" fill="#666666" fill-opacity="0.85"/><rect x="55.0" y="37.0" width="5.0" height="1" fill="#666666" fill-opacity="0.85"/><rect x="64.0" y="37.0" width="4.0" height="1" fill="#666666" fill-opacity="0.85"/><rect x="14.0" y="39.8" width="3.0" height="1" fill="#666666" fill-opacity="0.85"/><rect x="39.0" y="39.8" width="7.0" height="1" fill="#666666" fill-opacity="0.85"/><rect x="49.0" y="39.8" width="1.0" height="1" fill="#666666" fill-opacity="0.85"/><rect x="55.0" y="39.8" width="5.0" height="1" fill="#666666" fill-opacity="0.85"/><rect x="64.0" y="39.8" width="4.0" height="1" fill="#666666" fill-opacity="0.85"/><rect x="13.5" y="77.8" width="39.5" height="1" fill="#cdcdcd"/></svg>
<svg class="abs" style="left:910px;top:413px" width="5" height="5" viewBox="0 0 5 5"><path d="M0.500 0 H5 V4.500z" fill="#5d8a12"/></svg>
<svg class="abs" style="left:910px;top:392px" width="90" height="22" viewBox="0 0 90 22"><rect x="0.500" y="0.200" width="88.200" height="21" fill="#8bbb2b"/></svg>
<div id="t100" class="t rl" style="top:394.6px;left:920.9px;transform:scaleX(0.9566);transform-origin:0 50%;">Buchhaltung</div>
<div class="abs" id="hl69"></div>
</div></body></html>
